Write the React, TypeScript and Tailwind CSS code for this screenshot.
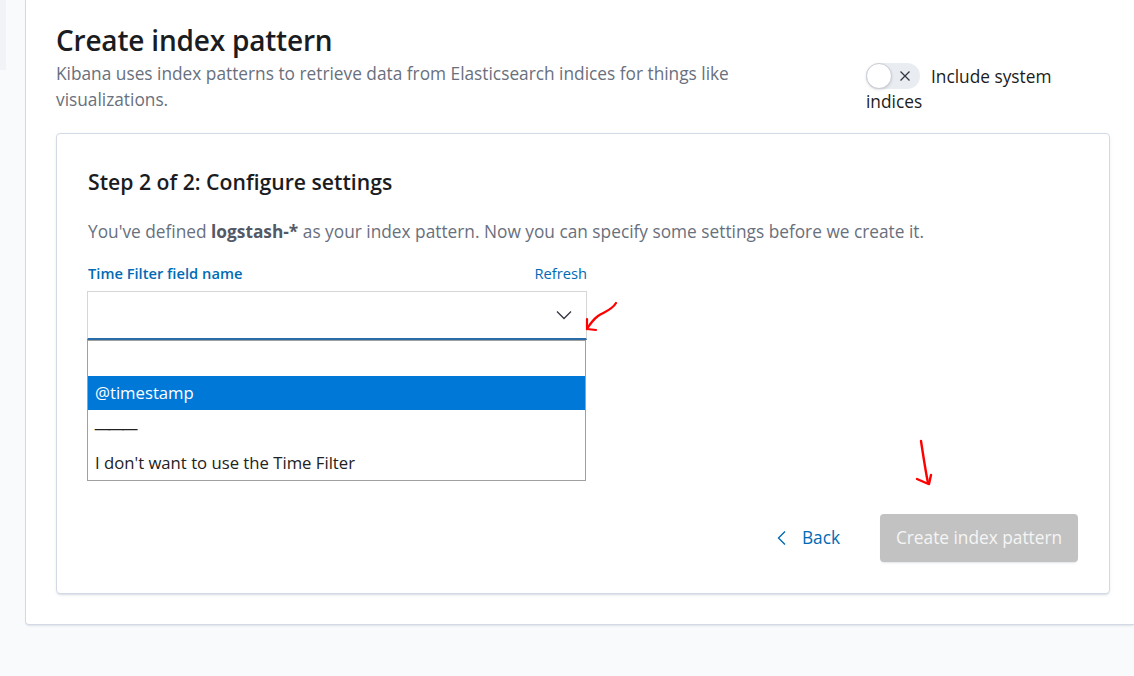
import React from "react";

const font = { fontFamily: '"Open Sans", "Noto Sans", sans-serif' };

function RedArrow1() {
  return (
    <svg className="absolute left-[582px] top-[300px]" width="40" height="34" viewBox="0 0 40 34" fill="none">
      <path d="M34 3 C30 10 22 12 16 16 C12 19 8 24 5 29" stroke="#ff0000" strokeWidth="2.2" strokeLinecap="round" />
      <path d="M5 19 L5 29 L14 30" stroke="#ff0000" strokeWidth="2.2" strokeLinecap="round" strokeLinejoin="round" />
    </svg>
  );
}

function RedArrow2() {
  return (
    <svg className="absolute left-[914px] top-[438px]" width="30" height="52" viewBox="0 0 30 52" fill="none">
      <path d="M7 3 C9 16 11 30 14 45" stroke="#ff0000" strokeWidth="2.4" strokeLinecap="round" />
      <path d="M3 41 C8 43 11 45 15 46 L17 37" stroke="#ff0000" strokeWidth="2.4" strokeLinecap="round" strokeLinejoin="round" />
    </svg>
  );
}

export default function App() {
  return (
    <div className="relative w-full h-[676px] bg-[#f9fafc] overflow-hidden flex" style={font}>
      <div className="w-[25px] shrink-0">
        <div className="w-[6px] h-[70px] bg-[#f1f3f7]" />
      </div>
      <div className="flex-1 h-[625px] bg-white border-l border-b border-[#d3dae6] rounded-bl-[4px] shadow-[0_2px_2px_-1px_rgba(152,162,179,0.3)] pl-[30px] pr-[24px] pt-[22px]">
        <div className="flex justify-between items-start w-[1054px] h-[91px]">
          <div className="w-[720px]">
            <h1 className="text-[28px] leading-[36px] font-semibold text-[#1a1c21] tracking-[-0.2px]">Create index pattern</h1>
            <p className="text-[17.3px] leading-[26px] text-[#69707d] mt-[3px]">
              Kibana uses index patterns to retrieve data from Elasticsearch indices for things like visualizations.
            </p>
          </div>
          <div className="w-[244px] mt-[42px] text-[17.3px] leading-[25px] text-[#1a1c21]">
            <span className="inline-flex align-middle items-center w-[54px] h-[26px] rounded-full bg-[#e9ecf0] relative mr-[11px] -mt-[4px]">
              <span className="absolute left-0 top-0 w-[26px] h-[26px] rounded-full bg-white border border-[#c9ced6] shadow-sm" />
              <svg className="absolute left-[33px] top-[7px]" width="12" height="12" viewBox="0 0 12 12">
                <path d="M1.5 1.5 L10.5 10.5 M10.5 1.5 L1.5 10.5" stroke="#343741" strokeWidth="1.3" />
              </svg>
            </span>
            Include system indices
          </div>
        </div>

        <div className="mt-[20px] w-[1054px] h-[461px] rounded-[4px] border border-[#d3dae6] shadow-[0_2px_2px_-1px_rgba(152,162,179,0.3),0_1px_5px_-2px_rgba(152,162,179,0.3)] bg-white pt-[34px] px-[31px] flex flex-col">
          <h2 className="text-[21.2px] leading-[28px] font-semibold text-[#1a1c21]">Step 2 of 2: Configure settings</h2>
          <p className="mt-[24px] text-[17.3px] leading-[24px] text-[#69707d]">
            You've defined <strong className="font-bold text-[#535966]">logstash-*</strong> as your index pattern. Now you can specify some settings before we create it.
          </p>
          <div className="mt-[20px] w-[499px]">
            <div className="flex justify-between items-center h-[18px] text-[14.7px]">
              <span className="font-semibold text-[#006bb4]">Time Filter field name</span>
              <span className="text-[#006bb4]">Refresh</span>
            </div>
            <div className="relative mt-[9px] -ml-[1px] w-[500px]">
              <div className="h-[49px] border border-[#d6d6d6] border-b-2 border-b-[#2a6ca8] bg-white flex items-center justify-end pr-[14px]">
                <svg width="16" height="10" viewBox="0 0 16 10">
                  <path d="M1 1.5 L8 8.5 L15 1.5" stroke="#343741" strokeWidth="1.3" fill="none" />
                </svg>
              </div>
              <div className="absolute left-0 top-[49px] w-[499px] border border-[#a0a0a0] bg-white text-[16.7px] text-[#222222] z-10">
                <div className="h-[35px]" />
                <div className="h-[34px] bg-[#0078d7] text-white flex items-center pl-[7px]">@timestamp</div>
                <div className="h-[35px] flex items-center pl-[6px] tracking-[-3px]">———</div>
                <div className="h-[35px] flex items-center pl-[7px]">I don't want to use the Time Filter</div>
              </div>
            </div>
          </div>
          <div className="mt-[174px] flex justify-end items-center">
            <button className="flex items-center text-[#006bb4] text-[17.3px] mr-[40px]">
              <svg width="10" height="16" viewBox="0 0 10 16" className="mr-[15px]">
                <path d="M8 1.5 L1.5 8 L8 14.5" stroke="#006bb4" strokeWidth="1.4" fill="none" />
              </svg>
              Back
            </button>
            <button className="h-[48px] w-[198px] rounded-[4px] bg-[#c2c2c2] text-[#f5f5f5] text-[17.3px] shadow-[0_2px_2px_-1px_rgba(152,162,179,0.3)]">
              Create index pattern
            </button>
          </div>
        </div>
      </div>
      <RedArrow1 />
      <RedArrow2 />
    </div>
  );
}
